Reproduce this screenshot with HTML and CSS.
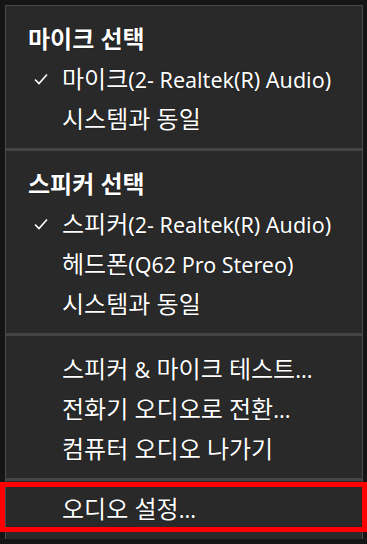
FILE: index.html
```html
<!DOCTYPE html>
<html lang="ko">
<head>
    <meta charset="UTF-8">
    <meta name="viewport" content="width=device-width, initial-scale=1.0">
    <title>오디오 메뉴</title>
    <link rel="stylesheet" href="styles.css">
</head>
<body>

<div class="menu">
    <div class="section">
        <div class="heading">마이크 선택</div>
        <div class="item checked">
            <svg class="check" viewBox="0 0 14 12"><polyline points="1,6.5 5,10.5 13,1.5"/></svg>
            마이크<span class="en">(2- Realtek(R) Audio)</span>
        </div>
        <div class="item">시스템과 동일</div>
    </div>

    <div class="section">
        <div class="heading">스피커 선택</div>
        <div class="item checked">
            <svg class="check" viewBox="0 0 14 12"><polyline points="1,6.5 5,10.5 13,1.5"/></svg>
            스피커<span class="en">(2- Realtek(R) Audio)</span>
        </div>
        <div class="item">헤드폰<span class="en">(Q62 Pro Stereo)</span></div>
        <div class="item">시스템과 동일</div>
    </div>

    <div class="section">
        <div class="item">스피커 <span class="en">&amp;</span> 마이크 테스트<span class="en">...</span></div>
        <div class="item">전화기 오디오로 전환<span class="en">...</span></div>
        <div class="item">컴퓨터 오디오 나가기</div>
    </div>

    <div class="section last">
        <div class="item">오디오 설정<span class="en">...</span></div>
    </div>
</div>

<!-- red highlight drawn over the last item -->
<div class="highlight"></div>

</body>
</html>
```

FILE: styles.css
```css
/* Global styles */
* {
    margin: 0;
    padding: 0;
    box-sizing: border-box;
}

body {
    background: #151515;
    width: 367px;
    height: 544px;
    overflow: hidden;
    position: relative;
    font-family: 'Noto Sans', 'Noto Sans CJK KR', sans-serif;
    color: #fff;
}

.menu {
    margin: 5px 4px 0 5px;
    height: 534px;
    background: #292929;
    border: 1px solid #4a4a4a;
    border-bottom: none;
}

.section {
    padding: 13px 0 9px;
    border-bottom: 3px solid #444;
}

.section.last {
    padding-top: 8px;
    border-bottom: none;
}

.heading {
    height: 40px;
    line-height: 40px;
    padding-left: 22px;
    font-size: 24px;
    font-weight: bold;
    text-shadow: 0 0 1px #000;
}

.item {
    position: relative;
    height: 40px;
    line-height: 40px;
    padding-left: 56px;
    font-size: 24px;
    white-space: nowrap;
    text-shadow: 0 0 1px #000;
}

/* latin runs are set a little smaller than the hangul */
.en {
    font-size: 21.5px;
}

.check {
    position: absolute;
    left: 28px;
    top: 14px;
    width: 14px;
    height: 12px;
    fill: none;
    stroke: #fff;
    stroke-width: 1.6;
}

.highlight {
    position: absolute;
    left: 0;
    right: 0;
    top: 482px;
    height: 50px;
    border: 5px solid #ff0000;
}
```
